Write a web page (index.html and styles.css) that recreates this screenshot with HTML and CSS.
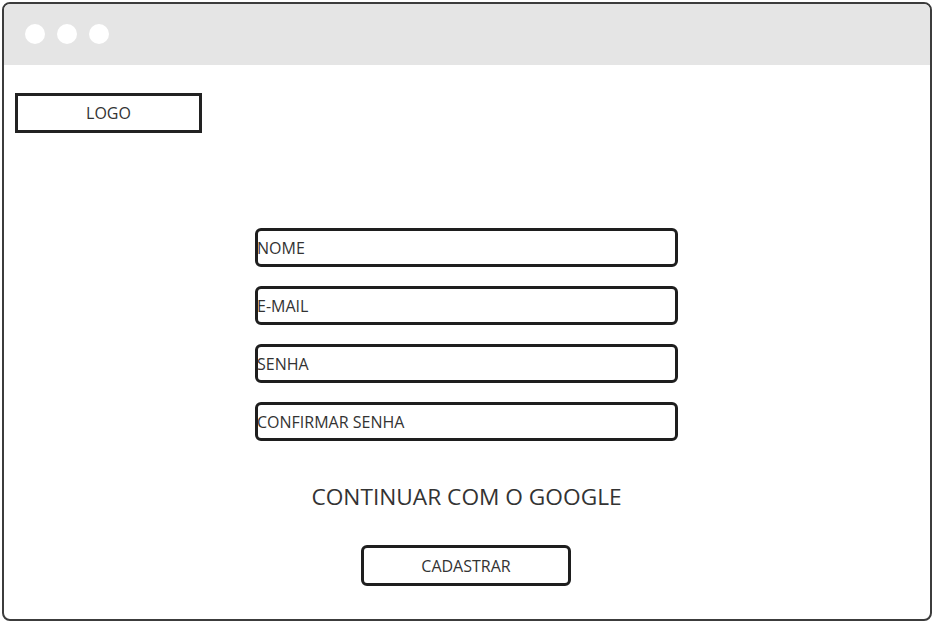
FILE: index.html
```
<!DOCTYPE html>
<html lang="pt">
<head>
<meta charset="utf-8">
<title>Cadastro</title>
<link rel="stylesheet" href="styles.css">
</head>
<body>
<div class="window">
  <div class="titlebar">
    <span class="dot"></span><span class="dot"></span><span class="dot"></span>
  </div>
  <div class="content">
    <div class="logo">LOGO</div>
    <form class="form">
      <div class="field">NOME</div>
      <div class="field">E-MAIL</div>
      <div class="field">SENHA</div>
      <div class="field">CONFIRMAR SENHA</div>
      <div class="google">CONTINUAR COM O GOOGLE</div>
      <div class="button">CADASTRAR</div>
    </form>
  </div>
</div>
</body>
</html>
```
FILE: styles.css
```
* { box-sizing: border-box; }
html, body { margin: 0; padding: 0; background: #fff; }
body {
  font-family: "Open Sans", "Liberation Sans", sans-serif;
  color: #333;
  width: 935px;
  height: 624px;
  overflow: hidden;
}
.window {
  margin: 2px 0 0 2px;
  width: 930px;
  height: 619px;
  border: 2px solid #3c3c3c;
  border-radius: 8px;
  overflow: hidden;
  display: flex;
  flex-direction: column;
}
.titlebar {
  height: 61px;
  background: #e5e5e5;
  display: flex;
  align-items: center;
  gap: 12px;
  padding-left: 21px;
  padding-bottom: 1px;
}
.dot {
  width: 20px;
  height: 20px;
  border-radius: 50%;
  background: #fff;
}
.content {
  flex: 1;
  display: flex;
  flex-direction: column;
  padding: 28px 0 0 11px;
}
.logo {
  width: 187px;
  height: 40px;
  border: 3px solid #222;
  display: flex;
  align-items: center;
  justify-content: center;
  font-size: 16px;
  color: #333;
}
.form {
  margin: 95px 0 0 240px;
  width: 423px;
  display: flex;
  flex-direction: column;
  gap: 19px;
}
.field {
  height: 39px;
  border: 3px solid #1e1e1e;
  border-radius: 6px;
  display: flex;
  align-items: center;
  font-size: 16px;
  color: #333;
  padding-top: 1px;
  text-indent: -1px;
}
.google {
  margin-top: 22px;
  text-align: center;
  font-size: 22.7px;
  color: #333;
  line-height: 30px;
}
.button {
  align-self: center;
  margin-top: 14px;
  margin-left: -1px;
  width: 210px;
  height: 41px;
  border: 3px solid #1e1e1e;
  border-radius: 6px;
  display: flex;
  align-items: center;
  justify-content: center;
  font-size: 16px;
  color: #333;
}
```
